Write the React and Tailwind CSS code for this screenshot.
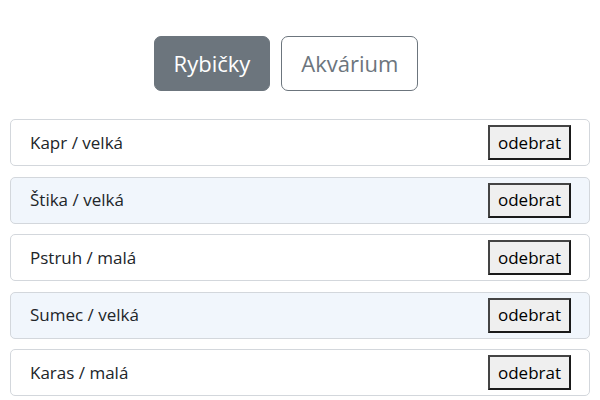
import React, { useState } from 'react';

const fish = [
    { name: 'Kapr', size: 'velká' },
    { name: 'Štika', size: 'velká' },
    { name: 'Pstruh', size: 'malá' },
    { name: 'Sumec', size: 'velká' },
    { name: 'Karas', size: 'malá' },
];

const App = () => {
    const [tab, setTab] = useState('ryby');
    const [items, setItems] = useState(fish);

    const tabClass = (active) =>
        active
            ? 'h-[55px] px-[19px] rounded-[7px] border border-[#6c757d] bg-[#6c757d] text-white text-[22px]'
            : 'h-[55px] px-[19px] rounded-[7px] border border-[#6c757d] bg-white text-[#6c757d] text-[22px]';

    return (
        <div className="w-[600px] h-[400px] bg-white overflow-hidden text-[#212529]" style={{ fontFamily: '"Open Sans", "Noto Sans", sans-serif' }}>
            <div className="flex justify-center gap-[11px] pt-[36px] pr-[28px]">
                <button className={tabClass(tab === 'ryby')} onClick={() => setTab('ryby')}>Rybičky</button>
                <button className={tabClass(tab === 'akvarium')} onClick={() => setTab('akvarium')}>Akvárium</button>
            </div>
            <ul className="flex flex-col gap-[10.5px] mt-[28px] mx-[10px] w-[580px]">
                {items.map((f, i) => (
                    <li
                        key={f.name}
                        className={`h-[47px] flex items-center justify-between pl-[19px] pr-[18px] border border-[#d3d7dc] rounded-[5px] ${i % 2 ? 'bg-[#f1f6fc]' : 'bg-white'}`}
                    >
                        <span className="text-[17px]">{f.name} / {f.size}</span>
                        <button
                            className="h-[35px] w-[83px] text-[17px] text-black bg-[#efefef] border-2 border-[#1a1a1a] border-t-[#444] border-l-[#444]"
                            onClick={() => setItems(items.filter((x) => x !== f))}
                        >
                            odebrat
                        </button>
                    </li>
                ))}
            </ul>
        </div>
    );
};

export default App;
